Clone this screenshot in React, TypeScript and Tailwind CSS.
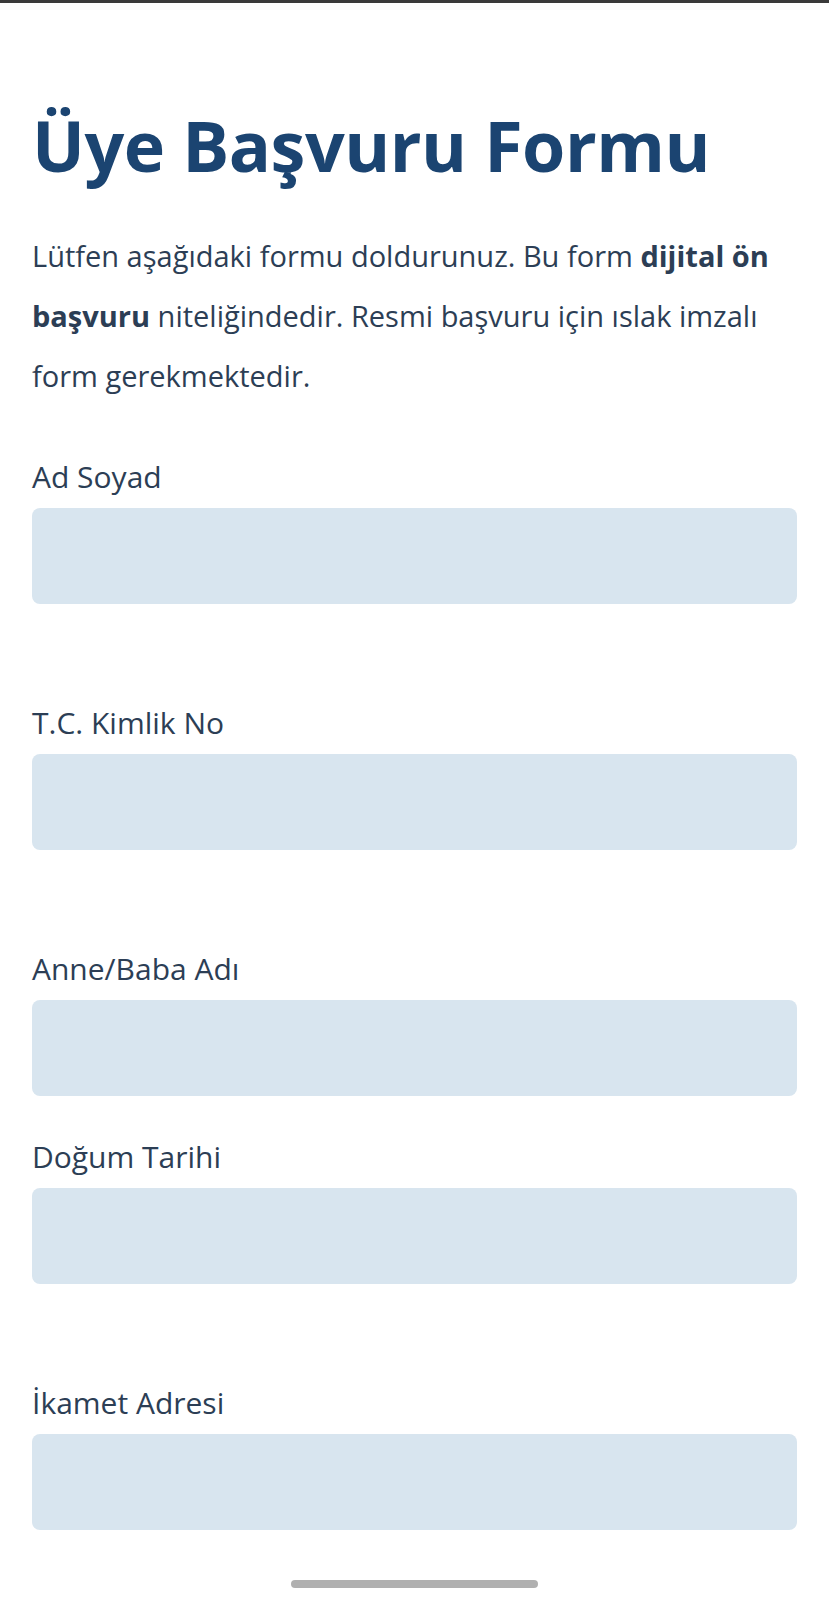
import React from "react";

type Field = { label: string; spacer?: boolean };

const fields: Field[] = [
  { label: "Ad Soyad", spacer: true },
  { label: "T.C. Kimlik No", spacer: true },
  { label: "Anne/Baba Adı" },
  { label: "Doğum Tarihi", spacer: true },
  { label: "İkamet Adresi" },
];

function FormField({ label, spacer }: Field) {
  return (
    <div className={spacer ? "mb-[99px]" : "mb-[41px]"}>
      <label className="block text-[30px] leading-[40px] text-[#2c3e55]">
        {label}
      </label>
      <input
        type="text"
        className="mt-[11px] block h-[96px] w-full rounded-lg border-0 bg-[#d8e5ef] px-4 text-[28px] text-[#2c3e55] outline-none"
      />
    </div>
  );
}

export default function App() {
  return (
    <div className="relative h-[1600px] w-full overflow-hidden bg-white font-['Open_Sans',_'Noto_Sans',_sans-serif]">
      <div className="h-[3px] bg-[#3a3a3a]" />

      <main className="px-8">
        <h1 className="mt-[100px] text-[70px] font-bold leading-[84px] tracking-[-0.5px] text-[#1b4471]">
          Üye Başvuru Formu
        </h1>
        <p className="mt-[39px] text-[29px] leading-[60px] text-[#2c3e55]">
          Lütfen aşağıdaki formu doldurunuz. Bu form{" "}
          <strong className="font-bold">dijital ön</strong>{" "}
          <strong className="font-bold">başvuru</strong> niteliğindedir. Resmi
          başvuru için ıslak imzalı form gerekmektedir.
        </p>

        <form className="mt-[51px]">
          {fields.map((f) => (
            <FormField key={f.label} {...f} />
          ))}
        </form>
      </main>

      {/* system home indicator */}
      <div className="absolute left-[291px] top-[1580px] h-[8px] w-[247px] rounded-full bg-[#b0b0b0]" />
    </div>
  );
}
